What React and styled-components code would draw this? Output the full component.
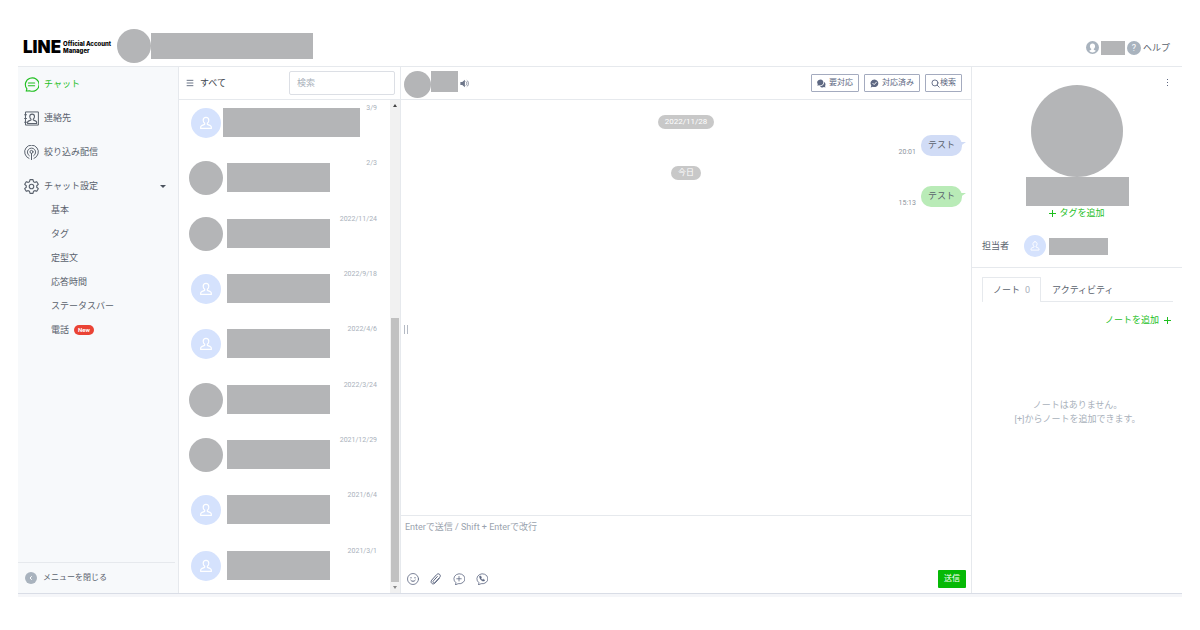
import React from 'react';
import styled, { createGlobalStyle } from 'styled-components';

const menu = ['基本', 'タグ', '定型文', '応答時間', 'ステータスバー'];

const chats = [
  { date: '3/9', wide: true },
  { date: '2/3', photo: true },
  { date: '2022/11/24', photo: true },
  { date: '2022/9/18' },
  { date: '2022/4/6' },
  { date: '2022/3/24', photo: true },
  { date: '2021/12/29', photo: true },
  { date: '2021/6/4' },
  { date: '2021/3/1' },
];

const Icon = ({ size = 15, children, ...rest }) => (
  <svg
    width={size}
    height={size}
    viewBox="0 0 24 24"
    fill="none"
    stroke="currentColor"
    strokeWidth="1.6"
    strokeLinecap="round"
    strokeLinejoin="round"
    aria-hidden="true"
    {...rest}
  >
    {children}
  </svg>
);

const personPath = 'M12 3.5c-2.600 0-4.200 1.900-4.200 4.400 0 2 .9 3.500 2.200 4.500v1.600l-4.600 2c-1 .5-1.400 1.200-1.400 2.200v2h16v-2c0-1-.4-1.700-1.400-2.200l-4.600-2v-1.600c1.300-1 2.200-2.500 2.200-4.500 0-2.500-1.600-4.400-4.200-4.400z';

const Person = ({ size }) => (
  <Icon size={size} strokeWidth="1.8">
    <path d={personPath} />
  </Icon>
);

const ChatIcon = () => (
  <Icon strokeWidth="1.8">
    <path d="M3.500 22.500l1.200-3.600A11 10.700 0 1 1 9 22z" />
    <path d="M7 9.500h10M7 14h10" />
  </Icon>
);

const ContactsIcon = () => (
  <Icon>
    <path d="M3 1.500h20v21H3zM1 6h3M1 12h3M1 18h3" />
    <g transform="translate(2.200 1.800) scale(.9)">
      <path d={personPath} strokeWidth="2" />
    </g>
  </Icon>
);

const BroadcastIcon = () => (
  <Icon>
    <path d="M8 21.500a11 11 0 1 1 8 0" />
    <path d="M8.500 17.200a6.600 6.600 0 1 1 7 0" />
    <circle cx="12" cy="11" r="2.400" />
    <path d="M12 13.500v10" />
  </Icon>
);

const GearIcon = () => (
  <Icon strokeWidth="1.8">
    <path d="M9.600 1h4.800l.8 3.300 2 1.100 3.200-1.100 2.500 4.200-2.500 2.300v2.400l2.500 2.300-2.500 4.200-3.200-1.100-2 1.100-.8 3.300H9.600l-.8-3.300-2-1.100-3.200 1.100-2.500-4.200 2.500-2.300v-2.400L1.100 8.500l2.500-4.200 3.200 1.100 2-1.100z" />
    <circle cx="12" cy="12" r="3.600" />
  </Icon>
);

const App = () => (
  <Page>
    <GlobalStyle />
    <Header>
      <Logo href="#home">
        <strong>LINE</strong>
        <span>
          Official Account
          <br />
          Manager
        </span>
      </Logo>
      <Disc $size={34} />
      <Block $width={162} $height={26} />
      <Account>
        <svg width="13" height="13" viewBox="0 0 24 24" aria-hidden="true">
          <circle cx="12" cy="12" r="12" fill="#a9b3be" />
          <path d="M12 4.500c-3 0-4.800 2.200-4.800 5.100 0 2.200 1 3.900 2.400 4.900v1.500L5.800 18c1.700 2 3.900 3 6.200 3s4.500-1 6.200-3l-3.800-2v-1.500c1.400-1 2.400-2.700 2.400-4.900 0-2.900-1.800-5.100-4.800-5.100z" fill="#fff" />
        </svg>
        <Block $width={24} $height={14} />
        <Help href="#help">
          <i>?</i>
          ヘルプ
        </Help>
      </Account>
    </Header>

    <Main>
      <Sidebar>
        <Menu>
          <MenuItem>
            <MenuLink href="#chat" $active><ChatIcon />チャット</MenuLink>
          </MenuItem>
          <MenuItem>
            <MenuLink href="#contacts"><ContactsIcon />連絡先</MenuLink>
          </MenuItem>
          <MenuItem>
            <MenuLink href="#broadcast"><BroadcastIcon />絞り込み配信</MenuLink>
          </MenuItem>
          <li>
            <MenuLink href="#settings"><GearIcon />チャット設定<Caret /></MenuLink>
            <SubMenu>
              {menu.map(label => (
                <li key={label}><SubLink href="#settings">{label}</SubLink></li>
              ))}
              <li><SubLink href="#call">電話<Badge>New</Badge></SubLink></li>
            </SubMenu>
          </li>
        </Menu>
        <CloseMenu type="button">
          <svg width="12" height="12" viewBox="0 0 24 24" aria-hidden="true">
            <circle cx="12" cy="12" r="12" fill="#a9b3be" />
            <path d="M13.500 8.500L10 12l3.500 3.500" fill="none" stroke="#fff" strokeWidth="2" />
          </svg>
          メニューを閉じる
        </CloseMenu>
      </Sidebar>

      <ListPane>
        <ListHeader>
          <Filter type="button">
            <Icon size={8} strokeWidth="3" strokeLinecap="butt">
              <path d="M2 4h20M2 12h20M2 20h20" />
            </Icon>
            すべて
          </Filter>
          <Search type="text" placeholder="検索" aria-label="検索" />
        </ListHeader>
        <ListBody>
          <ChatList>
            {chats.map(chat => (
              <ChatRow key={chat.date}>
                <AvatarCell>
                  {chat.photo ? <Disc $size={34} /> : <Avatar $size={30}><Person size={16} /></Avatar>}
                </AvatarCell>
                <ChatName $wide={chat.wide} />
                <time>{chat.date}</time>
              </ChatRow>
            ))}
          </ChatList>
          <Scrollbar aria-hidden="true">
            <Arrow $up />
            <Track><Thumb /></Track>
            <Arrow />
          </Scrollbar>
        </ListBody>
      </ListPane>

      <Talk>
        <TalkHeader>
          <Disc $size={27} />
          <Block $width={27} $height={21} />
          <Speaker size={9} stroke="none" fill="currentColor">
            <path d="M1 8h5l7-6v20l-7-6H1z" />
            <path d="M16 7c3 2.500 3 7.500 0 10M19 4c5 4 5 12 0 16" fill="none" stroke="currentColor" strokeWidth="2" />
          </Speaker>
          <Actions>
            <ActionButton type="button">
              <Icon size={9} stroke="none" fill="currentColor">
                <path d="M9 1a8.500 8 0 0 0-7 12.500L1 18l4.500-1.500A8.500 8 0 1 0 9 1z" />
                <path d="M19 8c3.500 2.500 5 7 2.500 10.500l1 4-4-1c-4 2-8.500.5-10.500-2.500 7 0 11.500-5 11-11z" />
              </Icon>
              <span>要対応</span>
            </ActionButton>
            <ActionButton type="button">
              <Icon size={9} stroke="none" fill="currentColor">
                <path d="M12 1.500a10.500 10 0 0 0-8.500 16L2 22.500l5.500-1.800A10.500 10 0 1 0 12 1.500z" />
                <path d="M7.500 11.500l3.500 3.500 6-6.500" fill="none" stroke="#fff" strokeWidth="2.500" />
              </Icon>
              <span>対応済み</span>
            </ActionButton>
            <ActionButton type="button" $tight>
              <Icon size={9} strokeWidth="2.400">
                <circle cx="10.500" cy="10.500" r="8" />
                <path d="M16.500 16.500L22 22" />
              </Icon>
              <span>検索</span>
            </ActionButton>
          </Actions>
        </TalkHeader>
        <Messages>
          <Handle aria-hidden="true" />
          <DateLabel>2022/11/28</DateLabel>
          <Message><time>20:01</time><Bubble $color="#d1dcf6">テスト</Bubble></Message>
          <DateLabel>今日</DateLabel>
          <Message><time>15:13</time><Bubble $color="#b9ebb7">テスト</Bubble></Message>
        </Messages>
        <Composer>
          <textarea placeholder="Enterで送信 / Shift + Enterで改行" aria-label="メッセージ" />
          <Tools>
            <ToolButton type="button" aria-label="スタンプ">
              <Icon size={12}>
                <circle cx="12" cy="12" r="11" />
                <path d="M8 9v1M16 9v1M7.500 14.500c2 3 7 3 9 0" strokeWidth="2" />
              </Icon>
            </ToolButton>
            <ToolButton type="button" aria-label="ファイル">
              <Icon size={12} strokeWidth="2">
                <path d="M18.500 10.500l-8.200 9.300c-2 2.300-4.800 2.600-6.700.9s-1.900-4.500 0-6.700L13.200 3.300c1.600-1.800 4.200-2.200 6-.6s1.900 4.100.3 5.900l-9.300 10.300c-1 1.100-2.500 1.200-3.500.3s-1-2.300 0-3.400l8-8.800" />
              </Icon>
            </ToolButton>
            <ToolButton type="button" aria-label="定型文">
              <Icon size={12}>
                <path d="M5 23l1-3.500A11 10 0 1 1 11 21.500z" />
                <path d="M12 7v9M7.500 11.500h9" />
              </Icon>
            </ToolButton>
            <ToolButton type="button" aria-label="電話">
              <Icon size={12}>
                <path d="M5 23l1-3.500A11 10 0 1 1 11 21.500z" />
                <path d="M7.500 6.500l2-.5 1.500 3-1.200 1.400c.7 1.500 1.600 2.400 3.200 3.100l1.400-1.200 2.800 1.600-.6 2c-4.500 1.500-10.500-4.500-9.100-9.400z" fill="currentColor" strokeWidth="1" />
              </Icon>
            </ToolButton>
            <Send type="button">送信</Send>
          </Tools>
        </Composer>
      </Talk>

      <Profile>
        <ProfileTop>
          <Kebab type="button" aria-label="メニュー"><i /><i /><i /></Kebab>
          <Disc $size={92} />
          <Block $width={103} $height={29} />
          <GreenLink href="#tag"><Plus />タグを追加</GreenLink>
          <Assignee>
            担当者
            <Avatar $size={22}><Person size={12} /></Avatar>
            <Block $width={59} $height={17} />
          </Assignee>
        </ProfileTop>
        <Notes>
          <Tabs role="tablist">
            <Tab type="button" role="tab" aria-selected="true">ノート<small>0</small></Tab>
            <Tab type="button" role="tab" aria-selected="false">アクティビティ</Tab>
          </Tabs>
          <AddNote href="#note">ノートを追加<Plus /></AddNote>
          <Empty>
            ノートはありません。
            <br />
            [+]からノートを追加できます。
          </Empty>
        </Notes>
      </Profile>
    </Main>
  </Page>
);

export default App;

const GlobalStyle = createGlobalStyle`
  * {
    box-sizing: border-box;
  }
  body {
    margin: 0;
    background: #fff;
    color: #5a626d;
    font: 9px/14px Roboto, "Noto Sans CJK JP", sans-serif;
  }
  button, input, textarea {
    margin: 0;
    padding: 0;
    border: 0;
    background: none;
    color: inherit;
    font: inherit;
  }
  button {
    cursor: pointer;
  }
  a {
    color: inherit;
    text-decoration: none;
  }
  ul {
    margin: 0;
    padding: 0;
    list-style: none;
  }
  svg {
    flex: none;
    display: block;
  }
`;

const line = '#e6e9ed';

const Page = styled.div`
  display: flex;
  flex-direction: column;
  min-height: 100vh;
  padding: 0 18px 33px;
`;

const Disc = styled.div`
  flex: none;
  width: ${p => p.$size}px;
  height: ${p => p.$size}px;
  border-radius: 50%;
  background: #b4b5b7;
`;

const Block = styled.div`
  flex: none;
  width: ${p => p.$width}px;
  height: ${p => p.$height}px;
  background: #b4b5b7;
`;

const Avatar = styled.div`
  display: flex;
  flex: none;
  align-items: center;
  justify-content: center;
  width: ${p => p.$size}px;
  height: ${p => p.$size}px;
  border-radius: 50%;
  background: #d5e2fd;
  color: #fff;
`;

const Header = styled.header`
  display: flex;
  align-items: center;
  height: 67px;
  padding: 26px 12px 1px 5px;
  border-bottom: 1px solid ${line};
`;

const Logo = styled.a`
  display: flex;
  align-items: center;
  gap: 2px;
  width: 94px;
  padding-top: 3px;
  color: #000;
  font-family: Inter, sans-serif;
  font-weight: 900;
  white-space: nowrap;
  strong {
    font-size: 17px;
    font-weight: 900;
    line-height: 18px;
  }
  span {
    font-size: 6px;
    font-weight: 800;
    line-height: 7px;
  }
`;

const Account = styled.div`
  display: flex;
  align-items: center;
  gap: 2px;
  margin-left: auto;
  padding-top: 4px;
`;

const Help = styled.a`
  display: flex;
  align-items: center;
  gap: 2px;
  i {
    width: 14px;
    height: 14px;
    border-radius: 50%;
    background: #a9b3be;
    color: #fff;
    font-style: normal;
    text-align: center;
  }
`;

const Main = styled.main`
  display: grid;
  flex: 1;
  grid-template-columns: 161px 222px 1fr 211px;
  margin-bottom: 3px;
  border-bottom: 1px solid #d9dde6;
  box-shadow: 0 3px #f5f6f9;
`;

const Sidebar = styled.nav`
  display: flex;
  flex-direction: column;
  border-right: 1px solid ${line};
  background: #f7f9fb;
`;

const Menu = styled.ul`
  flex: 1;
  padding: 5px 12px 0 6px;
`;

const MenuItem = styled.li`
  margin-bottom: 10px;
`;

const MenuLink = styled.a`
  display: flex;
  align-items: center;
  gap: 5px;
  height: 24px;
  color: ${p => (p.$active ? '#1fbf1f' : 'inherit')};
`;

const Caret = styled.i`
  margin-left: auto;
  border: 3px solid transparent;
  border-top-color: #4b535e;
  border-bottom-width: 0;
`;

const SubMenu = styled.ul`
  padding-left: 27px;
`;

const SubLink = styled.a`
  display: flex;
  align-items: center;
  gap: 5px;
  height: 24px;
`;

const Badge = styled.span`
  padding: 0 4px;
  border-radius: 5px;
  background: #ea4335;
  color: #fff;
  font-size: 6px;
  font-weight: 700;
  line-height: 10px;
`;

const CloseMenu = styled.button`
  display: flex;
  align-items: center;
  gap: 6px;
  height: 31px;
  margin-right: 3px;
  padding-left: 7px;
  border-top: 1px solid ${line};
  font-size: 8px;
`;

const ListPane = styled.section`
  display: flex;
  flex-direction: column;
  border-right: 1px solid ${line};
`;

const ListHeader = styled.div`
  display: flex;
  align-items: center;
  justify-content: space-between;
  height: 33px;
  padding: 0 5px 0 7px;
  border-bottom: 1px solid ${line};
`;

const Filter = styled.button`
  display: flex;
  align-items: center;
  gap: 6px;
  color: #3d444d;
  svg {
    color: #6d7689;
  }
`;

const Search = styled.input`
  width: 106px;
  height: 24px;
  padding: 0 7px;
  border: 1px solid #dcdfe5;
  border-radius: 2px;
  &::placeholder {
    color: #a9b1bb;
  }
`;

const ListBody = styled.div`
  display: flex;
  flex: 1;
`;

const ChatList = styled.ul`
  display: grid;
  flex: 1;
  grid-auto-rows: 1fr;
  margin-bottom: -5px;
`;

const ChatRow = styled.li`
  display: flex;
  align-items: flex-start;
  padding: 6px 13px 0 10px;
  time {
    margin-left: auto;
    margin-top: -2px;
    color: #a9b1bb;
    font-size: 7px;
    line-height: 8px;
  }
`;

const AvatarCell = styled.div`
  display: flex;
  align-items: center;
  justify-content: center;
  width: 34px;
  height: 34px;
`;

const ChatName = styled.div`
  width: ${p => (p.$wide ? 137 : 103)}px;
  height: 29px;
  margin: 2px 0 0 ${p => (p.$wide ? 0 : 4)}px;
  background: #b4b5b7;
`;

const Scrollbar = styled.div`
  display: flex;
  flex-direction: column;
  width: 10px;
  background: #f1f1f1;
`;

const Arrow = styled.i`
  height: 11px;
  &::after {
    content: '';
    display: block;
    width: 0;
    margin: 4px auto;
    border: 2px solid transparent;
    border-${p => (p.$up ? 'bottom' : 'top')}: 3px solid ${p => (p.$up ? '#444' : '#888')};
    border-${p => (p.$up ? 'top' : 'bottom')}-width: 0;
  }
`;

const Track = styled.div`
  display: flex;
  flex: 1;
  align-items: flex-end;
  padding: 0 1px;
`;

const Thumb = styled.div`
  width: 100%;
  height: 56%;
  background: #c1c1c1;
`;

const Talk = styled.section`
  display: flex;
  flex-direction: column;
  min-width: 0;
`;

const TalkHeader = styled.div`
  display: flex;
  align-items: flex-start;
  height: 33px;
  padding: 4px 9px 0 3px;
  border-bottom: 1px solid ${line};
`;

const Speaker = styled(Icon)`
  margin: 8px 2px;
  color: #6d7689;
`;

const Actions = styled.div`
  display: flex;
  gap: 5px;
  margin: 3px 0 0 auto;
`;

const ActionButton = styled.button`
  display: flex;
  align-items: center;
  gap: ${p => (p.$tight ? 0 : 3)}px;
  height: 18px;
  padding: 0 5px;
  border: 1px solid #a4abbf;
  border-radius: 1px;
  color: #5d6781;
  font-size: 8px;
  white-space: nowrap;
`;

const Messages = styled.div`
  position: relative;
  flex: 1;
  padding: 15px 9px 0;
`;

const Handle = styled.i`
  position: absolute;
  top: 225px;
  left: 3px;
  width: 4px;
  height: 9px;
  border: solid #b4bac4;
  border-width: 0 1px;
`;

const DateLabel = styled.div`
  width: fit-content;
  margin: 0 auto 6px;
  padding: 0 7px;
  border-radius: 7px;
  background: #c8c8c8;
  color: #fff;
  font-size: 8px;
  line-height: 14px;
`;

const Message = styled.div`
  display: flex;
  align-items: flex-end;
  justify-content: flex-end;
  gap: 5px;
  margin-bottom: 10px;
  time {
    color: #8d949d;
    font-size: 7px;
    line-height: 8px;
  }
`;

const Bubble = styled.div`
  position: relative;
  padding: 0 7px;
  border-radius: 10px;
  background: ${p => p.$color};
  line-height: 21px;
  &::after {
    content: '';
    position: absolute;
    top: 7px;
    right: -4px;
    border-top: 5px solid ${p => p.$color};
    border-right: 7px solid transparent;
  }
`;

const Composer = styled.div`
  display: flex;
  flex-direction: column;
  height: 78px;
  border-top: 1px solid ${line};
  textarea {
    flex: 1;
    padding: 4px;
    outline: 0;
    resize: none;
  }
  textarea::placeholder {
    color: #9aa3ae;
  }
`;

const Tools = styled.div`
  display: flex;
  align-items: center;
  gap: 11px;
  padding: 0 5px 5px 6px;
`;

const ToolButton = styled.button`
  color: #5d6781;
`;

const Send = styled.button`
  height: 18px;
  margin-left: auto;
  padding: 0 6px;
  border-radius: 1px;
  background: #06b906;
  color: #fff;
  font-size: 8px;
`;

const Profile = styled.aside`
  border-left: 1px solid ${line};
`;

const ProfileTop = styled.div`
  position: relative;
  display: flex;
  flex-direction: column;
  align-items: center;
  padding: 18px 10px 10px;
  border-bottom: 1px solid ${line};
`;

const Kebab = styled.button`
  position: absolute;
  top: 12px;
  right: 14px;
  display: grid;
  gap: 2px;
  i {
    width: 1px;
    height: 1px;
    background: #5d6781;
  }
`;

const Plus = styled.i`
  width: 7px;
  height: 7px;
  background:
    linear-gradient(currentColor, currentColor) center / 7px 1px no-repeat,
    linear-gradient(currentColor, currentColor) center / 1px 7px no-repeat;
`;

const GreenLink = styled.a`
  display: flex;
  align-items: center;
  gap: 3px;
  color: #1fbf1f;
`;

const Assignee = styled.div`
  display: flex;
  align-items: center;
  align-self: stretch;
  margin-top: 15px;
  ${Avatar} {
    margin: 0 3px 0 15px;
  }
`;

const Notes = styled.div`
  padding: 9px 9px 0 10px;
`;

const Tabs = styled.div`
  display: flex;
  border-bottom: 1px solid ${line};
`;

const Tab = styled.button`
  height: 24px;
  padding: 0 10px;
  border: 1px solid transparent;
  border-bottom: 0;
  &[aria-selected='true'] {
    height: 25px;
    margin-bottom: -1px;
    border-color: ${line};
    border-radius: 1px;
    background: #fff;
  }
  small {
    margin-left: 5px;
    color: #a9b1bb;
    font-size: 9px;
  }
`;

const AddNote = styled(GreenLink)`
  justify-content: flex-end;
  gap: 5px;
  margin: 11px 2px 0 0;
`;

const Empty = styled.p`
  margin: 71px 0 0;
  color: #a9b1bb;
  text-align: center;
`;
